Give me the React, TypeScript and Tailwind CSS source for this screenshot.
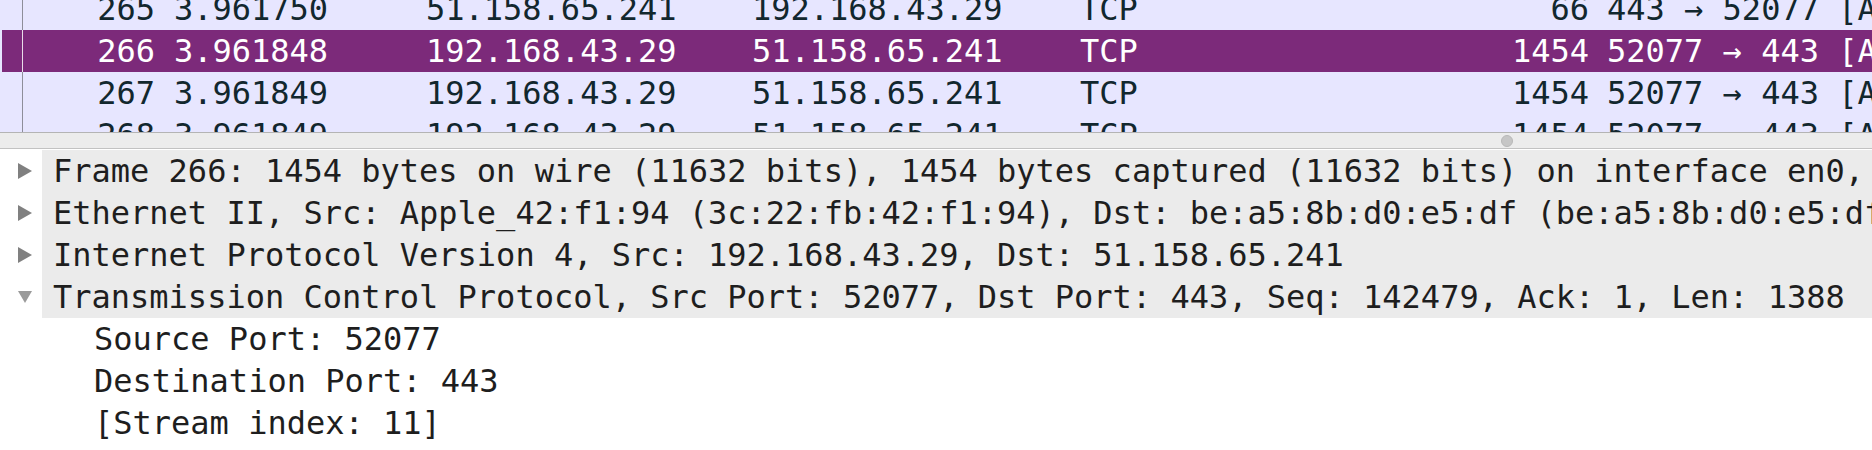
import React from "react";

type Pkt = { no: string; time: string; src: string; dst: string; proto: string; len: string; info: string };

const packets: Pkt[] = [
  { no: "265", time: "3.961750", src: "51.158.65.241", dst: "192.168.43.29", proto: "TCP", len: "66", info: "443 → 52077 [ACK] Seq=1 Ack=142479 Win=131072 Len=0" },
  { no: "266", time: "3.961848", src: "192.168.43.29", dst: "51.158.65.241", proto: "TCP", len: "1454", info: "52077 → 443 [ACK] Seq=142479 Ack=1 Win=131712 Len=1388" },
  { no: "267", time: "3.961849", src: "192.168.43.29", dst: "51.158.65.241", proto: "TCP", len: "1454", info: "52077 → 443 [ACK] Seq=143867 Ack=1 Win=131712 Len=1388" },
  { no: "268", time: "3.961849", src: "192.168.43.29", dst: "51.158.65.241", proto: "TCP", len: "1454", info: "52077 → 443 [ACK] Seq=145255 Ack=1 Win=131712 Len=1388" },
];

const mono = { fontFamily: '"DejaVu Sans Mono", "Liberation Mono", monospace' };

function RightTri() {
  return (
    <svg width="16" height="18" viewBox="0 0 16 18" className="block">
      <polygon points="1,1 15,9 1,17" fill="#808080" />
    </svg>
  );
}

function DownTri() {
  return (
    <svg width="16" height="14" viewBox="0 0 16 14" className="block">
      <polygon points="1,1 15,1 8,13" fill="#9a9a9a" />
    </svg>
  );
}

export default function App() {
  const tops = [
    { open: false, text: "Frame 266: 1454 bytes on wire (11632 bits), 1454 bytes captured (11632 bits) on interface en0, id 0" },
    { open: false, text: "Ethernet II, Src: Apple_42:f1:94 (3c:22:fb:42:f1:94), Dst: be:a5:8b:d0:e5:df (be:a5:8b:d0:e5:df)" },
    { open: false, text: "Internet Protocol Version 4, Src: 192.168.43.29, Dst: 51.158.65.241" },
    { open: true, text: "Transmission Control Protocol, Src Port: 52077, Dst Port: 443, Seq: 142479, Ack: 1, Len: 1388" },
  ];
  const children = ["Source Port: 52077", "Destination Port: 443", "[Stream index: 11]", "[TCP Segment Len: 1388]"];

  return (
    <div className="w-[1872px] h-[450px] overflow-hidden bg-white text-[32px] leading-none" style={mono}>
      {/* Packet list */}
      <div className="h-[133px] overflow-hidden bg-[#e7e6ff] border-b border-[#b4b4b4] pl-[2px]">
        <div className="mt-[-12px]">
          {packets.map((p) => {
            const sel = p.no === "266";
            return (
              <div
                key={p.no}
                className={
                  "flex h-[42px] items-center whitespace-nowrap " +
                  (sel ? "bg-[#7c2a7a] text-white" : "text-[#12272e]")
                }
              >
                <div className={"w-[21px] h-full shrink-0 border-r " + (sel ? "border-[#e8dce8]" : "border-[#8e8e9a]")} />
                <div className="w-[142px] shrink-0 text-right pr-[10px]">{p.no}</div>
                <div className="w-[252px] shrink-0 pl-[9px]">{p.time}</div>
                <div className="w-[326px] shrink-0 pl-[9px]">{p.src}</div>
                <div className="w-[327px] shrink-0 pl-[9px]">{p.dst}</div>
                <div className="w-[230px] shrink-0 pl-[10px]">{p.proto}</div>
                <div className="w-[299px] shrink-0 text-right pr-[10px]">{p.len}</div>
                <div className="pl-[8px]">{p.info}</div>
              </div>
            );
          })}
        </div>
      </div>

      {/* Splitter */}
      <div className="h-[16px] bg-[#ececec] border-b border-[#c2c2c2] flex items-center">
        <div className="ml-[1501px] w-[12px] h-[12px] rounded-full bg-[#c6c6c6] border border-[#b8b8b8]" />
      </div>

      {/* Packet details */}
      <div className="pt-[1px] text-[#1e1e1e] whitespace-nowrap">
        {tops.map((t, i) => (
          <div key={i} className="flex h-[42px] items-center">
            <div className="w-[42px] h-full shrink-0 bg-white flex items-center pl-[17px]">
              {t.open ? <DownTri /> : <RightTri />}
            </div>
            <div className="flex-1 h-full bg-[#ebebeb] flex items-center pl-[11px] overflow-hidden">{t.text}</div>
          </div>
        ))}
        {children.map((c, i) => (
          <div key={i} className="flex h-[42px] items-center pl-[94px]">
            {c}
          </div>
        ))}
      </div>
    </div>
  );
}
